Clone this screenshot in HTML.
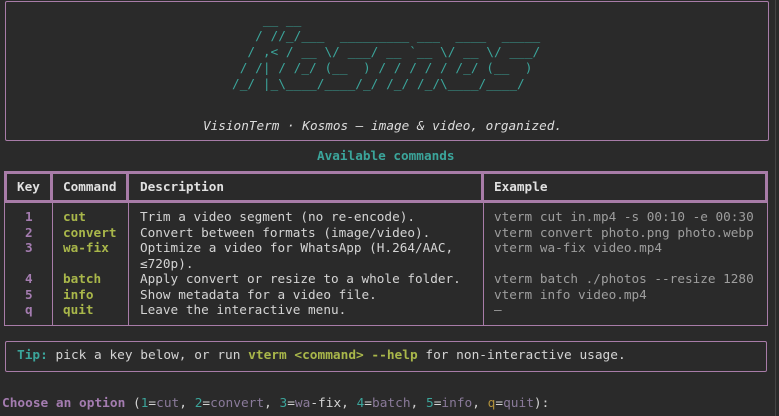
<!DOCTYPE html>
<html><head><meta charset="utf-8"><style>
html,body{margin:0;padding:0;background:#2a2a2a;width:779px;height:416px;overflow:hidden;position:relative}
body{font-family:"DejaVu Sans Mono","Liberation Mono",monospace;font-size:12.7px;color:#d4d4d4}
.a{position:absolute;white-space:pre;line-height:15.5px}
.b{position:absolute;box-sizing:border-box}
.p{color:#a47cb0;font-weight:bold}
.g{color:#a9b74a;font-weight:bold}
.t{color:#3ba59b}
.e{color:#9e9e9e}
</style></head><body>
<div class="b" style="left:5px;top:1px;width:764px;height:140px;border:1.5px solid #a87ca8;border-radius:2px"></div>
<div class="a t" style="left:232px;top:13px;line-height:16px;font-size:12.8px">    __ __
   / //_/___  _________ ___  ____  _____
  / ,&lt; / __ \/ ___/ __ `__ \/ __ \/ ___/
 / /| / /_/ (__  ) / / / / / /_/ (__  )
/_/ |_\____/____/_/ /_/ /_/\____/____/</div>
<div class="a" style="left:203px;top:118px;font-style:italic;color:#dcdcdc">VisionTerm · Kosmos — image &amp; video, organized.</div>
<div class="a t" style="left:317px;top:148px;font-weight:bold">Available commands</div>

<div class="b" style="left:4px;top:171px;width:764px;height:155px;border:1px solid #a87ca8"></div>
<div class="b" style="left:4px;top:171px;width:49px;height:32px;border:3px solid #a87ca8"></div>
<div class="b" style="left:50px;top:171px;width:79px;height:32px;border:3px solid #a87ca8"></div>
<div class="b" style="left:126px;top:171px;width:358px;height:32px;border:3px solid #a87ca8"></div>
<div class="b" style="left:481px;top:171px;width:287px;height:32px;border:3px solid #a87ca8"></div>
<div class="b" style="left:52px;top:203px;width:1px;height:122px;background:#a87ca8"></div>
<div class="b" style="left:128px;top:203px;width:1px;height:122px;background:#a87ca8"></div>
<div class="b" style="left:483px;top:203px;width:1px;height:122px;background:#a87ca8"></div>

<div class="a" style="left:17px;top:179px;font-weight:bold;color:#e0e0e0">Key</div>
<div class="a" style="left:63px;top:179px;font-weight:bold;color:#e0e0e0">Command</div>
<div class="a" style="left:140px;top:179px;font-weight:bold;color:#e0e0e0">Description</div>
<div class="a" style="left:494px;top:179px;font-weight:bold;color:#e0e0e0">Example</div>

<div class="a p" style="left:25px;top:209px">1
2
3

4
5
q</div>
<div class="a g" style="left:63px;top:209px">cut
convert
wa-fix

batch
info
quit</div>
<div class="a" style="left:140px;top:209px">Trim a video segment (no re-encode).
Convert between formats (image/video).
Optimize a video for WhatsApp (H.264/AAC,
≤720p).
Apply convert or resize to a whole folder.
Show metadata for a video file.
Leave the interactive menu.</div>
<div class="a e" style="left:494px;top:209px">vterm cut in.mp4 -s 00:10 -e 00:30
vterm convert photo.png photo.webp
vterm wa-fix video.mp4

vterm batch ./photos --resize 1280
vterm info video.mp4
—</div>

<div class="b" style="left:5px;top:341px;width:762px;height:31px;border:1px solid #a87ca8;border-radius:2px"></div>
<div class="a" style="left:17px;top:348px;font-size:12.8px"><span class="t" style="font-weight:bold">Tip:</span> pick a key below, or run <span class="g">vterm &lt;command&gt; --help</span> for non-interactive usage.</div>
<div class="a" style="left:2px;top:396px;font-size:12.8px"><span class="p">Choose an option</span> (<span class="t">1</span>=<span style="color:#8a7a9a">cut</span>, <span class="t">2</span>=<span style="color:#8a7a9a">convert</span>, <span class="t">3</span>=<span style="color:#8a7a9a">wa</span>-fix, <span class="t">4</span>=<span style="color:#8a7a9a">batch</span>, <span class="t">5</span>=<span style="color:#8a7a9a">info</span>, <span style="color:#b0903a">q</span>=<span style="color:#8a7a9a">quit</span>):</div>
<div class="b" style="left:775px;top:0;width:1px;height:416px;background:#444"></div>
</body></html>
